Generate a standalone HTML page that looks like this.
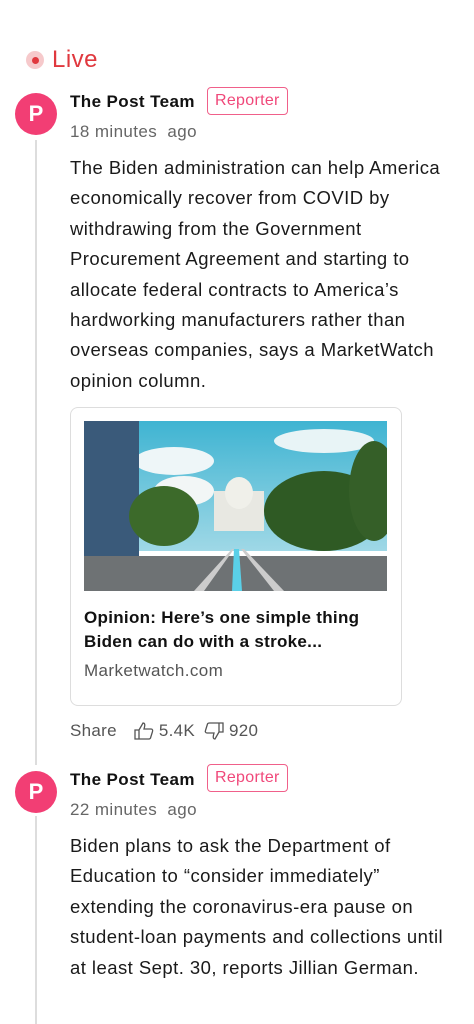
<!DOCTYPE html>
<html><head><meta charset="utf-8"><style>
body{margin:0;width:474px;height:1024px;background:#fff;font-family:"Liberation Sans",sans-serif;position:relative;overflow:hidden;color:#111}
.abs{position:absolute}
.live{left:26px;top:46px;color:#e0383e;font-size:24px;display:flex;align-items:center;letter-spacing:.5px}
.dot{width:18px;height:18px;border-radius:50%;background:#f6c9cb;display:flex;align-items:center;justify-content:center;margin-right:8px}
.dot i{width:7px;height:7px;border-radius:50%;background:#e0383e}
.av{width:42px;height:42px;border-radius:50%;background:#f23e74;color:#fff;font-weight:bold;font-size:22px;display:flex;align-items:center;justify-content:center}
.name{font-weight:bold;font-size:17px;letter-spacing:.4px}
.tag{border:1.5px solid #f0608a;color:#f0487a;border-radius:4px;font-size:16px;padding:4px 7px;letter-spacing:.3px}
.time{color:#666;font-size:17px;letter-spacing:.4px}
.txt{left:70px;font-size:18.5px;line-height:30.4px;color:#1a1a1a;white-space:nowrap;letter-spacing:.45px}
.line{left:35px;width:1.5px;background:#ddd}
</style></head><body>
<div class="abs live"><div class="dot"><i></i></div>Live</div>
<div class="abs line" style="top:140px;height:625px"></div>
<div class="abs line" style="top:816px;height:208px"></div>

<div class="abs av" style="left:15px;top:93px">P</div>
<div class="abs name" style="left:70px;top:92px">The Post Team</div>
<div class="abs tag" style="left:207px;top:87px">Reporter</div>
<div class="abs time" style="left:70px;top:122px">18 minutes &nbsp;ago</div>
<div class="abs txt" style="top:153px">The Biden administration can help America<br>economically recover from COVID by<br>withdrawing from the Government<br>Procurement Agreement and starting to<br>allocate federal contracts to America’s<br>hardworking manufacturers rather than<br>overseas companies, says a MarketWatch<br>opinion column.</div>

<div class="abs" style="left:70px;top:407px;width:330px;height:297px;border:1px solid #ddd;border-radius:8px"></div>
<div class="abs" style="left:84px;top:421px;width:303px;height:170px;overflow:hidden">
<svg width="303" height="170">
<defs><linearGradient id="s" x1="0" y1="0" x2="0" y2="1"><stop offset="0" stop-color="#3fb4d2"/><stop offset="1" stop-color="#9fd8e6"/></linearGradient></defs>
<rect width="303" height="130" fill="url(#s)"/>
<ellipse cx="90" cy="40" rx="40" ry="14" fill="#eef6f8"/><ellipse cx="240" cy="20" rx="50" ry="12" fill="#e8f4f6"/>
<ellipse cx="100" cy="70" rx="30" ry="15" fill="#f2f6f6"/>
<rect x="130" y="70" width="50" height="40" fill="#e8e8e2"/><ellipse cx="155" cy="72" rx="14" ry="16" fill="#f0f0ea"/>
<rect x="0" y="0" width="55" height="135" fill="#3a5a7a"/>
<ellipse cx="80" cy="95" rx="35" ry="30" fill="#3c6a2a"/><ellipse cx="240" cy="90" rx="60" ry="40" fill="#2f5a24"/><ellipse cx="290" cy="70" rx="25" ry="50" fill="#355f28"/>
<polygon points="0,135 303,135 303,170 0,170" fill="#6e7274"/>
<polygon points="150,128 155,128 158,170 148,170" fill="#5ad0e8"/>
<polygon points="148,128 150,128 120,170 110,170" fill="#ccc"/>
<polygon points="157,128 160,128 200,170 190,170" fill="#ccc"/>
</svg></div>
<div class="abs" style="left:84px;top:606px;font-weight:bold;font-size:17px;line-height:24px;white-space:nowrap;letter-spacing:.3px">Opinion: Here’s one simple thing<br>Biden can do with a stroke...</div>
<div class="abs" style="left:84px;top:661px;font-size:17px;color:#555;letter-spacing:.4px">Marketwatch.com</div>

<div class="abs" style="left:70px;top:721px;font-size:17px;color:#555;display:flex;align-items:center;gap:4px;letter-spacing:.3px">Share
<svg width="22" height="20" style="margin-left:12px" viewBox="0 0 22 20" fill="none" stroke="#555" stroke-width="1.3"><path d="M2 9h4v9H2zM6 9l4-7c2 0 2 2 1.5 4L11 8h7c1.5 0 2 1.5 1.5 2.5l-2 6.5c-.4 1-1 1-2 1H6"/></svg>5.4K
<svg width="22" height="20" style="margin-left:4px" viewBox="0 0 22 20" fill="none" stroke="#555" stroke-width="1.3"><path d="M20 11h-4V2h4zM16 11l-4 7c-2 0-2-2-1.5-4L11 12H4c-1.5 0-2-1.5-1.5-2.5l2-6.5c.4-1 1-1 2-1H16"/></svg>920</div>

<div class="abs av" style="left:15px;top:771px">P</div>
<div class="abs name" style="left:70px;top:770px">The Post Team</div>
<div class="abs tag" style="left:207px;top:764px">Reporter</div>
<div class="abs time" style="left:70px;top:800px">22 minutes &nbsp;ago</div>
<div class="abs txt" style="top:831px">Biden plans to ask the Department of<br>Education to “consider immediately”<br>extending the coronavirus-era pause on<br>student-loan payments and collections until<br>at least Sept. 30, reports Jillian German.</div>
</body></html>
